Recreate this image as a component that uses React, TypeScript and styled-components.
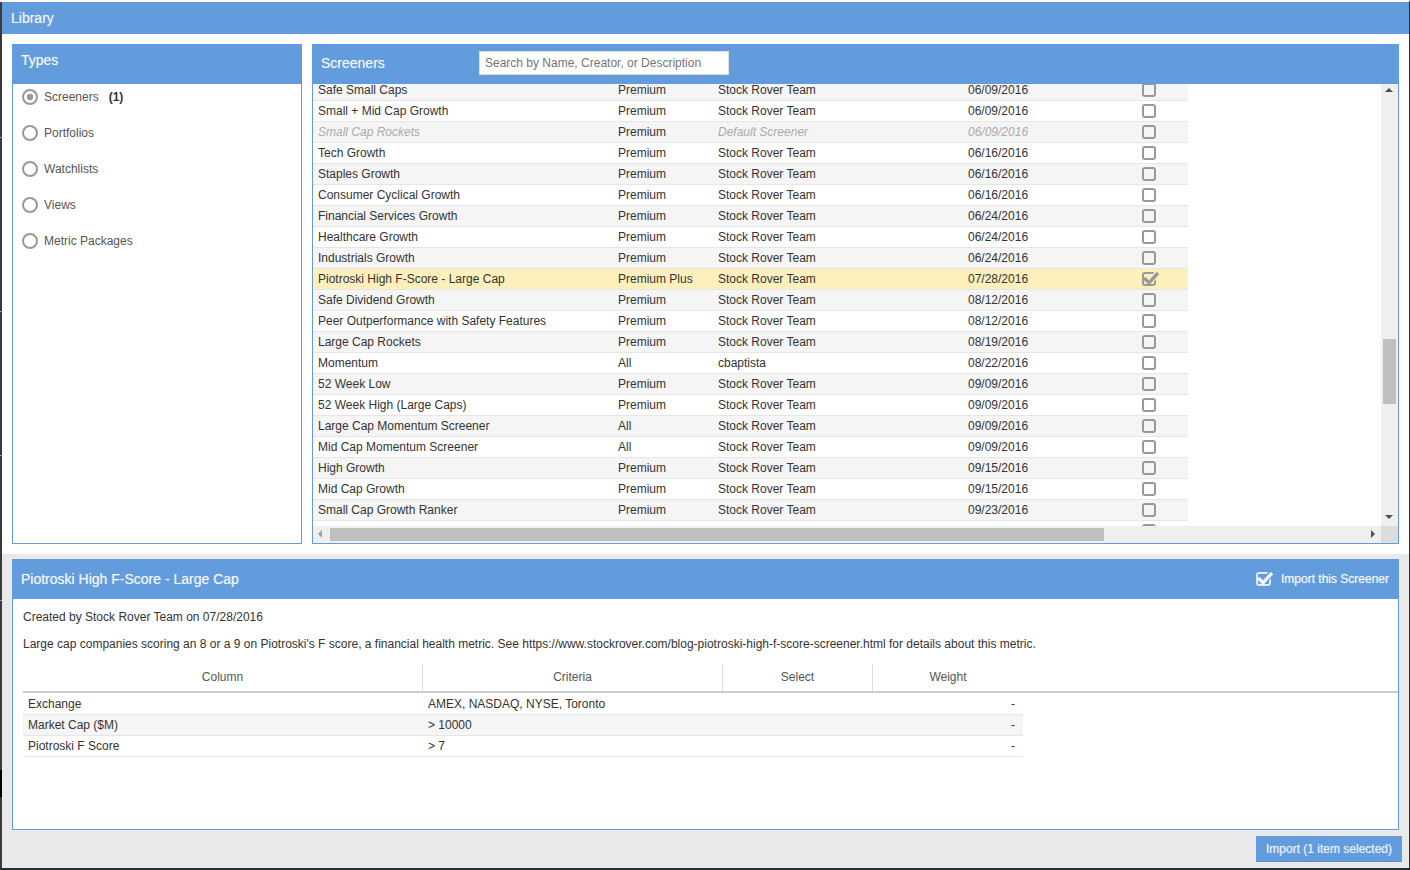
import React from 'react';
import styled, {createGlobalStyle} from 'styled-components';

type RowType = {
    name: string
    plan: string
    creator: string
    date: string
    disabled?: boolean
    selected?: boolean
}

const stock = 'Stock Rover Team'

const rows: RowType[] = [
    {name: 'Safe Small Caps', plan: 'Premium', creator: stock, date: '06/09/2016'},
    {name: 'Small + Mid Cap Growth', plan: 'Premium', creator: stock, date: '06/09/2016'},
    {name: 'Small Cap Rockets', plan: 'Premium', creator: 'Default Screener', date: '06/09/2016', disabled: true},
    {name: 'Tech Growth', plan: 'Premium', creator: stock, date: '06/16/2016'},
    {name: 'Staples Growth', plan: 'Premium', creator: stock, date: '06/16/2016'},
    {name: 'Consumer Cyclical Growth', plan: 'Premium', creator: stock, date: '06/16/2016'},
    {name: 'Financial Services Growth', plan: 'Premium', creator: stock, date: '06/24/2016'},
    {name: 'Healthcare Growth', plan: 'Premium', creator: stock, date: '06/24/2016'},
    {name: 'Industrials Growth', plan: 'Premium', creator: stock, date: '06/24/2016'},
    {name: 'Piotroski High F-Score - Large Cap', plan: 'Premium Plus', creator: stock, date: '07/28/2016', selected: true},
    {name: 'Safe Dividend Growth', plan: 'Premium', creator: stock, date: '08/12/2016'},
    {name: 'Peer Outperformance with Safety Features', plan: 'Premium', creator: stock, date: '08/12/2016'},
    {name: 'Large Cap Rockets', plan: 'Premium', creator: stock, date: '08/19/2016'},
    {name: 'Momentum', plan: 'All', creator: 'cbaptista', date: '08/22/2016'},
    {name: '52 Week Low', plan: 'Premium', creator: stock, date: '09/09/2016'},
    {name: '52 Week High (Large Caps)', plan: 'Premium', creator: stock, date: '09/09/2016'},
    {name: 'Large Cap Momentum Screener', plan: 'All', creator: stock, date: '09/09/2016'},
    {name: 'Mid Cap Momentum Screener', plan: 'All', creator: stock, date: '09/09/2016'},
    {name: 'High Growth', plan: 'Premium', creator: stock, date: '09/15/2016'},
    {name: 'Mid Cap Growth', plan: 'Premium', creator: stock, date: '09/15/2016'},
    {name: 'Small Cap Growth Ranker', plan: 'Premium', creator: stock, date: '09/23/2016'},
    {name: '', plan: '', creator: '', date: ''},
]

const types = ['Screeners', 'Portfolios', 'Watchlists', 'Views', 'Metric Packages']

const criteria = [
    {column: 'Exchange', value: 'AMEX, NASDAQ, NYSE, Toronto'},
    {column: 'Market Cap ($M)', value: '> 10000'},
    {column: 'Piotroski F Score', value: '> 7'},
]

// halo is the colour behind the box, it cuts the notch where the tick crosses the border
const CheckMark = (props: {color: string, halo: string}) => (
    <CheckSvg viewBox="0 0 18 16">
        <path d="M9 8.5 L16.5 0" fill="none" stroke={props.halo} strokeWidth="6"/>
        <path d="M2.2 6 L7 10.8 L16 1" fill="none" stroke={props.color} strokeWidth="3.4"/>
    </CheckSvg>
)

export default function App() {
    return (
        <Page>
            <GlobalStyle/>
            <TitleBar>Library</TitleBar>
            <TopArea>
                <TypesPanel>
                    <TypesHead>Types</TypesHead>
                    <TypesList>
                        {types.map((el, index) => (
                            <TypeItem key={el}>
                                <Radio $on={index === 0}/>
                                {el}
                                {index === 0 && <Count>(1)</Count>}
                            </TypeItem>
                        ))}
                    </TypesList>
                </TypesPanel>
                <ScreenersPanel>
                    <ScreenersHead>
                        <ScreenersTitle>Screeners</ScreenersTitle>
                        <Search placeholder="Search by Name, Creator, or Description"/>
                    </ScreenersHead>
                    <ScrollArea>
                        <Viewport>
                            <RowsWrap>
                                {rows.map((el, index) => (
                                    <Row key={index} $odd={index % 2 === 0} $selected={el.selected}>
                                        <Cell $muted={el.disabled}>{el.name}</Cell>
                                        <Cell>{el.plan}</Cell>
                                        <Cell $muted={el.disabled}>{el.creator}</Cell>
                                        <Cell $muted={el.disabled}>{el.date}</Cell>
                                        <CheckCell>
                                            <Box>{el.selected && <CheckMark color="#999" halo="#fdf0bc"/>}</Box>
                                        </CheckCell>
                                    </Row>
                                ))}
                            </RowsWrap>
                        </Viewport>
                        <VTrack>
                            <ArrowUp/>
                            <VThumb/>
                            <ArrowDown/>
                        </VTrack>
                        <HTrack>
                            <ArrowLeft/>
                            <HThumb/>
                            <ArrowRight/>
                        </HTrack>
                        <Corner/>
                    </ScrollArea>
                </ScreenersPanel>
            </TopArea>
            <BottomArea>
                <DetailPanel>
                    <DetailHead>
                        <HeadTitle>Piotroski High F-Score - Large Cap</HeadTitle>
                        <ImportLink>
                            <WhiteBox><CheckMark color="#f2f6fc" halo="#629cdc"/></WhiteBox>
                            Import this Screener
                        </ImportLink>
                    </DetailHead>
                    <DetailBody>
                        <Line>Created by Stock Rover Team on 07/28/2016</Line>
                        <Line>Large cap companies scoring an 8 or a 9 on Piotroski's F score, a financial health metric. See https://www.stockrover.com/blog-piotroski-high-f-score-screener.html for details about this metric.</Line>
                        <CriteriaHead>
                            <HeadCell>Column</HeadCell>
                            <HeadCell>Criteria</HeadCell>
                            <HeadCell>Select</HeadCell>
                            <HeadCell>Weight</HeadCell>
                        </CriteriaHead>
                        {criteria.map((el, index) => (
                            <CriteriaRow key={el.column} $odd={index === 1}>
                                <span>{el.column}</span>
                                <span>{el.value}</span>
                                <span/>
                                <Weight>-</Weight>
                            </CriteriaRow>
                        ))}
                    </DetailBody>
                </DetailPanel>
                <Footer>
                    <ImportButton>Import (1 item selected)</ImportButton>
                </Footer>
            </BottomArea>
        </Page>
    )
}

const GlobalStyle = createGlobalStyle`
  html, body {
    margin: 0;
    padding: 0;
    background: #fff;
  }

  * {
    box-sizing: border-box;
  }
`

// left edge of the window behind it is a dark strip with a few light ticks
const Page = styled.div`
  width: 1410px;
  height: 870px;
  overflow: hidden;
  display: flex;
  flex-direction: column;
  padding-left: 2px;
  border-top: 2px solid #fff;
  border-right: 1px solid #2a2f36;
  border-bottom: 2px solid #2a2f36;
  background: linear-gradient(to bottom,
  #3a3a3a 0 135px, #999 135px 136px,
  #3a3a3a 136px 309px, #999 309px 310px,
  #3a3a3a 310px 453px, #999 453px 454px,
  #3a3a3a 454px 598px, #999 598px 599px,
  #3a3a3a 599px 768px, #000 768px 795px,
  #3a3a3a 795px);
  font-family: "Liberation Sans", Arial, sans-serif;
  font-size: 12px;
  color: #333;
`

const TitleBar = styled.div`
  height: 32px;
  flex: none;
  display: flex;
  align-items: center;
  padding-left: 9px;
  background: #629cdc;
  color: #eef4fc;
  font-size: 14px;
  text-shadow: 0 0 1px rgba(255, 255, 255, .5);
`

const TopArea = styled.div`
  height: 520px;
  flex: none;
  display: flex;
  gap: 10px;
  padding: 10px;
  background: #fff;
`

const TypesPanel = styled.div`
  width: 290px;
  flex: none;
  display: flex;
  flex-direction: column;
  border: 1px solid #629cdc;
`

const TypesHead = styled.div`
  height: 40px;
  flex: none;
  padding: 8px 0 0 9px;
  margin: -1px -1px 0;
  background: #629cdc;
  color: #f2f6fc;
  font-size: 14px;
  text-shadow: 0 0 1px rgba(255, 255, 255, .5);
`

const TypesList = styled.div`
  display: flex;
  flex-direction: column;
`

const TypeItem = styled.div`
  height: 36px;
  display: flex;
  align-items: center;
  padding: 0 0 10px 9px;
  color: #555;
`

const Radio = styled.span<{$on?: boolean}>`
  width: 16px;
  height: 16px;
  margin-right: 6px;
  flex: none;
  border: 2.5px solid #999;
  border-radius: 50%;
  background: ${props => props.$on ? 'radial-gradient(circle, #999 0 3px, #fff 3.5px)' : '#fff'};
`

const Count = styled.b`
  margin-left: 10px;
  font-weight: 700;
  color: #333;
`

const ScreenersPanel = styled.div`
  flex: 1;
  min-width: 0;
  display: flex;
  flex-direction: column;
  border: 1px solid #629cdc;
`

const ScreenersHead = styled.div`
  height: 40px;
  flex: none;
  margin: -1px -1px 0;
  display: flex;
  align-items: center;
  padding: 0 0 2px 9px;
  background: #629cdc;
`

const HeadTitle = styled.div`
  color: #f2f6fc;
  font-size: 14px;
  text-shadow: 0 0 1px rgba(255, 255, 255, .5);
`

const ScreenersTitle = styled(HeadTitle)`
  width: 158px;
`

const Search = styled.input`
  width: 250px;
  height: 24px;
  padding: 0 5px;
  border: 1px solid #ddd;
  border-radius: 0;
  outline: none;
  background: #fff;
  font-family: inherit;
  font-size: 12px;

  &::placeholder {
    color: #757575;
    opacity: 1;
  }
`

const ScrollArea = styled.div`
  flex: 1;
  min-height: 0;
  display: grid;
  grid-template-columns: 1fr 17px;
  grid-template-rows: 1fr 17px;
`

const Viewport = styled.div`
  overflow: hidden;
`

const RowsWrap = styled.div`
  width: 875px;
  margin-top: -4px;
`

const Row = styled.div<{$odd?: boolean, $selected?: boolean}>`
  height: 21px;
  display: grid;
  grid-template-columns: 300px 100px 250px 150px 70px;
  align-items: center;
  padding-left: 5px;
  border-bottom: 1px solid #e6e6e6;
  background: ${props => props.$selected ? '#fdf0bc' : props.$odd ? '#f5f5f5' : '#fff'};
`

const Cell = styled.div<{$muted?: boolean}>`
  white-space: nowrap;
  color: ${props => props.$muted ? '#aaa' : '#333'};
  font-style: ${props => props.$muted ? 'italic' : 'normal'};
`

const CheckCell = styled.div`
  display: flex;
`

const Box = styled.span`
  position: relative;
  width: 14px;
  height: 14px;
  margin-left: 24px;
  border: 2px solid #999;
  border-radius: 3px;
  background: transparent;
`

const WhiteBox = styled(Box)`
  width: 15px;
  height: 14px;
  margin: 0 10px 0 0;
  border-color: #dfe9f7;
`

const CheckSvg = styled.svg`
  position: absolute;
  left: -2px;
  top: -2px;
  width: 18px;
  height: 16px;
  overflow: visible;
`

const VTrack = styled.div`
  position: relative;
  background: #efefef;
`

const VThumb = styled.div`
  position: absolute;
  left: 2px;
  top: 255px;
  width: 13px;
  height: 65px;
  background: #bfbfbf;
`

const HTrack = styled.div`
  position: relative;
  background: #efefef;
`

const HThumb = styled.div`
  position: absolute;
  left: 17px;
  top: 2px;
  width: 774px;
  height: 13px;
  background: #bfbfbf;
`

const Corner = styled.div`
  background: #dcdcdc;
`

const ArrowUp = styled.span`
  position: absolute;
  left: 4px;
  top: 4px;
  border: 4px solid transparent;
  border-top: 0;
  border-bottom-color: #505050;
`

const ArrowDown = styled.span`
  position: absolute;
  left: 4px;
  bottom: 7px;
  border: 4px solid transparent;
  border-bottom: 0;
  border-top-color: #505050;
`

const ArrowLeft = styled.span`
  position: absolute;
  left: 5px;
  top: 4px;
  border: 4px solid transparent;
  border-left: 0;
  border-right-color: #a0a0a0;
`

const ArrowRight = styled.span`
  position: absolute;
  right: 6px;
  top: 4px;
  border: 4px solid transparent;
  border-right: 0;
  border-left-color: #505050;
`

const BottomArea = styled.div`
  flex: 1;
  min-height: 0;
  display: flex;
  flex-direction: column;
  padding: 5px 10px 0;
  background: #e9e9e9;
`

const DetailPanel = styled.div`
  height: 271px;
  flex: none;
  display: flex;
  flex-direction: column;
  border: 1px solid #629cdc;
  background: #fff;
`

const DetailHead = styled.div`
  height: 40px;
  flex: none;
  margin: -1px -1px 0;
  display: flex;
  align-items: center;
  justify-content: space-between;
  padding: 0 10px 0 9px;
  background: #629cdc;
`

const ImportLink = styled.div`
  display: flex;
  align-items: center;
  color: #f2f6fc;
  font-size: 12px;
  text-shadow: 0 0 1px rgba(255, 255, 255, .6);
`

const DetailBody = styled.div`
  padding: 10px 0 0 10px;
`

const Line = styled.div`
  height: 27px;
  line-height: 16px;
  white-space: nowrap;
`

const CriteriaHead = styled.div`
  height: 29px;
  margin: 1px 0 1px;
  display: grid;
  grid-template-columns: 400px 300px 150px 150px;
  border-bottom: 2px solid #ccc;
`

const HeadCell = styled.div`
  display: flex;
  align-items: center;
  justify-content: center;
  padding-bottom: 1px;
  border-right: 1px solid #ddd;
  color: #555;

  &:last-child {
    border-right: none;
  }
`

const CriteriaRow = styled.div<{$odd?: boolean}>`
  width: 1000px;
  height: 21px;
  display: grid;
  grid-template-columns: 400px 300px 150px 145px;
  align-items: center;
  padding-left: 5px;
  border-bottom: 1px solid #e6e6e6;
  background: ${props => props.$odd ? '#f5f5f5' : '#fff'};
`

const Weight = styled.span`
  text-align: right;
  padding-right: 8px;
`

const Footer = styled.div`
  display: flex;
  justify-content: flex-end;
  padding: 6px 0 0;
  margin-right: -3px;
`

const ImportButton = styled.button`
  width: 146px;
  height: 26px;
  padding: 0;
  border: none;
  border-bottom: 1px solid #5a92cf;
  background: #629cdc;
  color: #e6eef9;
  font-family: inherit;
  font-size: 12px;
  text-shadow: 0 0 1px rgba(255, 255, 255, .6);
`
